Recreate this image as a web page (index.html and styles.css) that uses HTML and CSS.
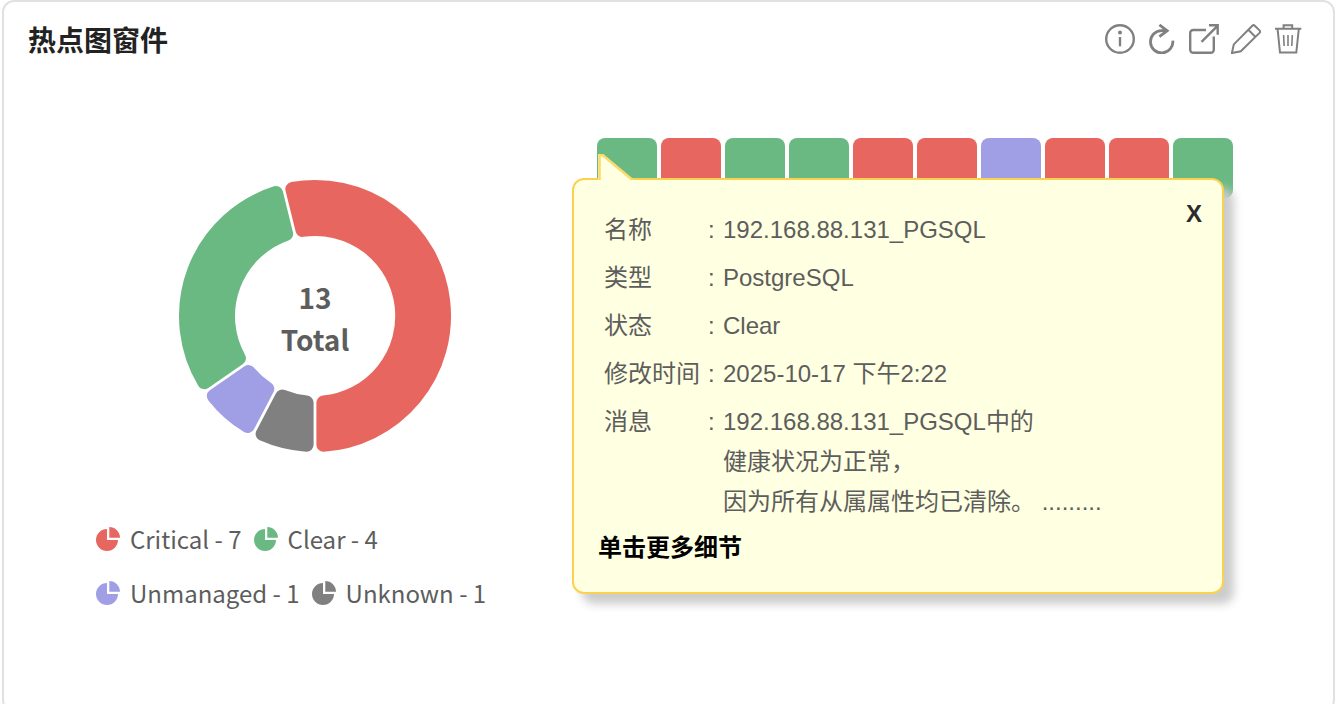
FILE: index.html
```html
<!DOCTYPE html>
<html lang="zh-CN">
<head>
<meta charset="utf-8">
<meta name="viewport" content="width=device-width, initial-scale=1">
<title>热点图窗件</title>
<link rel="stylesheet" href="styles.css">
</head>
<body>
<main class="widget">
  <header class="widget-header">
    <h1 class="widget-title">热点图窗件</h1>
    <div class="toolbar">
      <button type="button" class="tool" aria-label="信息">
        <svg viewBox="0 0 30 30"><circle cx="15" cy="15" r="13.8"/><path d="M15 13v9.3"/><circle class="solid" cx="15" cy="8.4" r="2"/></svg>
      </button>
      <button type="button" class="tool bold" aria-label="刷新">
        <svg viewBox="0 0 30 30"><path d="M25.8 16.6A11.2 11.2 0 1 1 14.6 6.6H20M12.4 .9L20.2 6.7L12.4 12.6"/></svg>
      </button>
      <button type="button" class="tool" aria-label="打开">
        <svg viewBox="0 0 30 30"><path d="M17 6H4.2a3 3 0 0 0-3 3v16.8a3 3 0 0 0 3 3h17.6a3 3 0 0 0 3-3V12.5M12.5 17.8L28.5 1.8M20 1.3H28.7V10.7"/></svg>
      </button>
      <button type="button" class="tool thin" aria-label="编辑">
        <svg viewBox="0 0 30 30"><path d="M.9 29.1L2.8 20.4L21.3 1.7a1.8 1.8 0 0 1 2.5 0l4.7 4.7a1.8 1.8 0 0 1 0 2.5L9.8 27.3ZM17.3 5.8l7.2 7.2"/></svg>
      </button>
      <button type="button" class="tool thin" aria-label="删除">
        <svg viewBox="0 0 30 30"><path d="M2 4.8H28.3M10.6 4.5V1.2H19.2V4.5M4.6 5L7 28.6H23.3L25.8 5"/><path class="hair" d="M10.6 11l.5 11M15 11v11M19.3 11l-.5 11"/></svg>
      </button>
    </div>
  </header>

  <div class="widget-body">
    <section class="chart-panel" aria-label="状态分布">
      <div class="donut">
        <svg class="donut-ring" viewBox="-138 -138 276 276" aria-hidden="true">
          <path class="critical" d="M-22.65-126.99A129 129 0 1 1 8.4 128.73V86.59A87 87 0 1 0-12.56-86.08Z"/>
          <path class="unknown" d="M-8.4 128.73A129 129 0 0 1-52.38 117.89L-32.8 80.58A87 87 0 0 0-8.4 86.59Z"/>
          <path class="unmanaged" d="M-67.26 110.09A129 129 0 0 1-101.17 80.04L-66.49 56.1A87 87 0 0 0-47.68 72.78Z"/>
          <path class="clear" d="M-110.71 66.22A129 129 0 0 1-38.97-122.97L-28.88-82.06A87 87 0 0 0-76.03 42.28Z"/>
        </svg>
        <div class="donut-total"><span>13</span><span>Total</span></div>
      </div>
      <svg class="defs" aria-hidden="true">
        <symbol id="pie" viewBox="0 0 24 24"><path d="M11 2V13H22A11 11 0 1 1 11 2ZM13.3 0A10.7 10.7 0 0 1 24 10.7H13.3Z"/></symbol>
      </svg>
      <ul class="legend">
        <li><svg class="critical"><use href="#pie"/></svg>Critical - 7</li>
        <li><svg class="clear"><use href="#pie"/></svg>Clear - 4</li>
        <li><svg class="unmanaged"><use href="#pie"/></svg>Unmanaged - 1</li>
        <li><svg class="unknown"><use href="#pie"/></svg>Unknown - 1</li>
      </ul>
    </section>

    <section class="heat-panel" aria-label="热点图">
      <div class="tiles">
        <button type="button" class="tile clear" aria-label="Clear"></button>
        <button type="button" class="tile critical" aria-label="Critical"></button>
        <button type="button" class="tile clear" aria-label="Clear"></button>
        <button type="button" class="tile clear" aria-label="Clear"></button>
        <button type="button" class="tile critical" aria-label="Critical"></button>
        <button type="button" class="tile critical" aria-label="Critical"></button>
        <button type="button" class="tile unmanaged" aria-label="Unmanaged"></button>
        <button type="button" class="tile critical" aria-label="Critical"></button>
        <button type="button" class="tile critical" aria-label="Critical"></button>
        <button type="button" class="tile clear" aria-label="Clear"></button>
        <button type="button" class="tile critical" aria-label="Critical"></button>
        <button type="button" class="tile critical" aria-label="Critical"></button>
        <button type="button" class="tile unknown" aria-label="Unknown"></button>
      </div>
      <div class="tooltip">
        <svg class="tooltip-arrow" viewBox="0 0 40 28" aria-hidden="true"><path class="arrow-fill" d="M1 0H6L36 26V28H1Z"/><path class="arrow-edge" d="M2.5 26V1H5.5L35 25.5"/></svg>
        <button type="button" class="close" aria-label="关闭">X</button>
        <table class="details" id="details">
          <tr><th scope="row">名称</th><td class="colon">:</td><td>192.168.88.131_PGSQL</td></tr>
          <tr><th scope="row">类型</th><td class="colon">:</td><td>PostgreSQL</td></tr>
          <tr><th scope="row">状态</th><td class="colon">:</td><td>Clear</td></tr>
          <tr><th scope="row">修改时间</th><td class="colon">:</td><td>2025-10-17 下午2:22</td></tr>
          <tr><th scope="row">消息</th><td class="colon">:</td><td>192.168.88.131_PGSQL中的<br>健康状况为正常，<br>因为所有从属属性均已清除。 .........</td></tr>
        </table>
        <a class="more" href="#details">单击更多细节</a>
      </div>
    </section>
  </div>
</main>
</body>
</html>
```
FILE: styles.css
```css
:root {
  --critical: #e86660;
  --clear: #6ab983;
  --unmanaged: #a09fe5;
  --unknown: #808080;
}

* { box-sizing: border-box; }

html { height: 100%; overflow: hidden; }

body {
  margin: 0;
  background: #fff;
  font-family: "Noto Sans CJK SC", sans-serif;
  color: #5d5d5d;
}

button {
  padding: 0;
  border: 0;
  background: none;
  cursor: pointer;
}

.critical { color: var(--critical); }
.clear { color: var(--clear); }
.unmanaged { color: var(--unmanaged); }
.unknown { color: var(--unknown); }

.widget {
  min-height: calc(100vh + 8px);
  margin: 0 1px 0 2px;
  border: 2px solid #e1e1e1;
  border-radius: 12px;
}

.widget-header {
  display: flex;
  align-items: center;
  justify-content: space-between;
  padding: 16px 30px 0 24px;
}

.widget-title {
  margin: 0;
  font-size: 28px;
  line-height: 42px;
  font-weight: 700;
  color: #222;
}

.toolbar { display: flex; gap: 12px; }

.tool { width: 30px; height: 30px; }

.tool svg {
  display: block;
  width: 30px;
  height: 30px;
  fill: none;
  stroke: #808080;
  stroke-width: 2.4;
}

.tool.bold svg { stroke-width: 2.8; }
.tool.thin svg { stroke-width: 2; }
.tool .hair { stroke-width: 1.6; }
.tool .solid { fill: #808080; stroke: none; }

.widget-body {
  display: flex;
  gap: 62px;
  padding: 78px 30px 40px 92px;
}

.chart-panel { flex: 0 0 438px; padding-top: 40px; }

.donut { display: grid; place-items: center; }
.donut > * { grid-area: 1 / 1; }

.donut-ring { display: block; width: 276px; height: 276px; }

.donut-ring path {
  fill: currentColor;
  stroke: currentColor;
  stroke-width: 14;
  stroke-linejoin: round;
}

.donut-total {
  display: grid;
  justify-items: center;
  padding-top: 4px;
  font-size: 28px;
  line-height: 42px;
  font-weight: 700;
}

.defs { display: none; }

.legend {
  display: flex;
  flex-wrap: wrap;
  column-gap: 12px;
  margin: 58px 0 0;
  padding: 0;
  list-style: none;
  font-size: 24px;
  line-height: 54px;
}

.legend li { display: flex; align-items: center; gap: 10px; white-space: nowrap; }
.legend svg { width: 24px; height: 24px; fill: currentColor; }

.heat-panel { position: relative; flex: 1; margin-left: 1px; }

.tiles { display: flex; flex-wrap: wrap; gap: 4px; max-width: 636px; }

.tile { width: 60px; height: 60px; border-radius: 8px; background: currentColor; }

.tooltip {
  position: absolute;
  top: 40px;
  left: -25px;
  width: 652px;
  padding: 26px 24px 24px;
  border: 2px solid #fad24f;
  border-radius: 12px;
  background: #ffffe1;
  box-shadow: 10px 10px 10px #ccc;
  font: 24px/40px "Liberation Sans", "Noto Sans CJK SC", sans-serif;
}

.tooltip-arrow {
  position: absolute;
  top: -26px;
  left: 23px;
  width: 40px;
  height: 28px;
}

.arrow-fill { fill: #ffffe1; }
.arrow-edge { fill: none; stroke: #fcdb6a; stroke-width: 2.6; }

.close {
  position: absolute;
  top: 18px;
  right: 17px;
  width: 22px;
  height: 32px;
  font: 700 24px/32px "Liberation Sans", sans-serif;
  color: #2b2b2b;
}

.details { border-spacing: 0; margin: 0 0 2px 6px; }

.details th,
.details td { padding: 4px 0; vertical-align: top; text-align: left; font-weight: 400; }

.details th { width: 104px; }
.details .colon { width: 15px; }

.more { display: block; color: #000; font-weight: 700; text-decoration: none; }
```
